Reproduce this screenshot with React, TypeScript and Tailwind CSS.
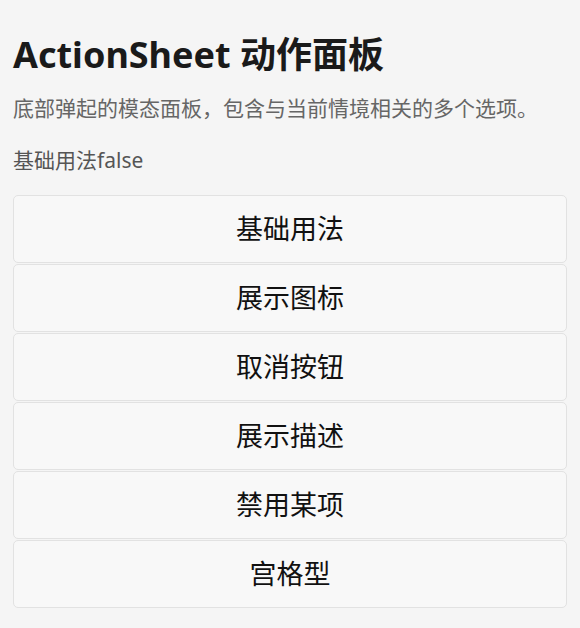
import React, { useState } from "react";

const DEMOS = ["基础用法", "展示图标", "取消按钮", "展示描述", "禁用某项", "宫格型"];

export default function App() {
  const [visible, setVisible] = useState(false);

  return (
    <div className="min-h-screen bg-[#f5f5f5] px-[13px] pt-[28px] pb-6 font-['Noto_Sans','Noto_Sans_CJK_SC',sans-serif]">
      <h1 className="text-[36px] leading-[54px] font-bold text-[#1a1a1a]">
        ActionSheet 动作面板
      </h1>
      <p className="mt-[10px] text-[21px] leading-[32px] text-[#666]">
        底部弹起的模态面板，包含与当前情境相关的多个选项。
      </p>
      <div className="mt-[20px] text-[21px] leading-[32px] text-[#555]">
        基础用法{String(visible)}
      </div>

      <div className="mt-[19px] flex flex-col gap-px">
        {DEMOS.map((name) => (
          <button
            key={name}
            onClick={() => name === "基础用法" && setVisible(!visible)}
            className="h-[68px] w-full rounded-[5px] border border-[#e2e2e2] bg-[#f8f8f8] text-[27px] text-[#111] flex items-center justify-center"
          >
            {name}
          </button>
        ))}
      </div>
    </div>
  );
}
